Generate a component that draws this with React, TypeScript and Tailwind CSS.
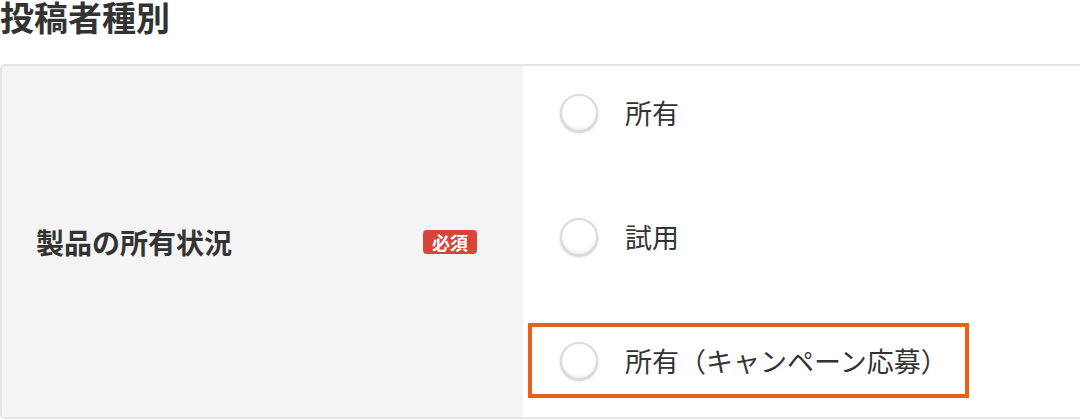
import React from "react";

const font = { fontFamily: '"Noto Sans CJK JP", "Noto Sans", sans-serif' };

function Radio() {
  return (
    <span className="block w-[38px] h-[38px] shrink-0 rounded-full bg-white border-2 border-[#dcdcdc] shadow-[0_1px_2px_rgba(0,0,0,0.22),inset_0_-2px_3px_rgba(0,0,0,0.06)]" />
  );
}

function Option({ label, highlighted }: { label: string; highlighted?: boolean }) {
  return (
    <label
      className={
        "flex items-center h-[75px] w-[441px] ml-[5px] border-4 pl-[28px] gap-[27px] " +
        (highlighted ? "border-[#e9601b]" : "border-transparent")
      }
    >
      <Radio />
      <span className="text-[27px] leading-none text-[#333] font-normal">{label}</span>
    </label>
  );
}

export default function App() {
  return (
    <div className="w-[1080px] h-[420px] overflow-hidden bg-white" style={font}>
      <h2 className="text-[34px] font-bold leading-none text-[#333]">投稿者種別</h2>
      <div className="mt-[30px] w-[1100px] h-[355px] border-2 border-[#e5e5e5] rounded-[5px] flex overflow-hidden">
        <div className="w-[521px] bg-[#f4f4f4] flex items-center justify-between pl-[34px] pr-[46px]">
          <span className="text-[28px] font-bold leading-none text-[#333]">製品の所有状況</span>
          <span className="w-[54px] h-[24px] rounded-[4px] bg-[#d5453a] text-white text-[18px] font-bold leading-none flex items-center justify-center">
            必須
          </span>
        </div>
        <div className="flex-1 bg-white flex flex-col pt-[9px] gap-[49px]">
          <Option label="所有" />
          <Option label="試用" />
          <Option label="所有（キャンペーン応募）" highlighted />
        </div>
      </div>
    </div>
  );
}
